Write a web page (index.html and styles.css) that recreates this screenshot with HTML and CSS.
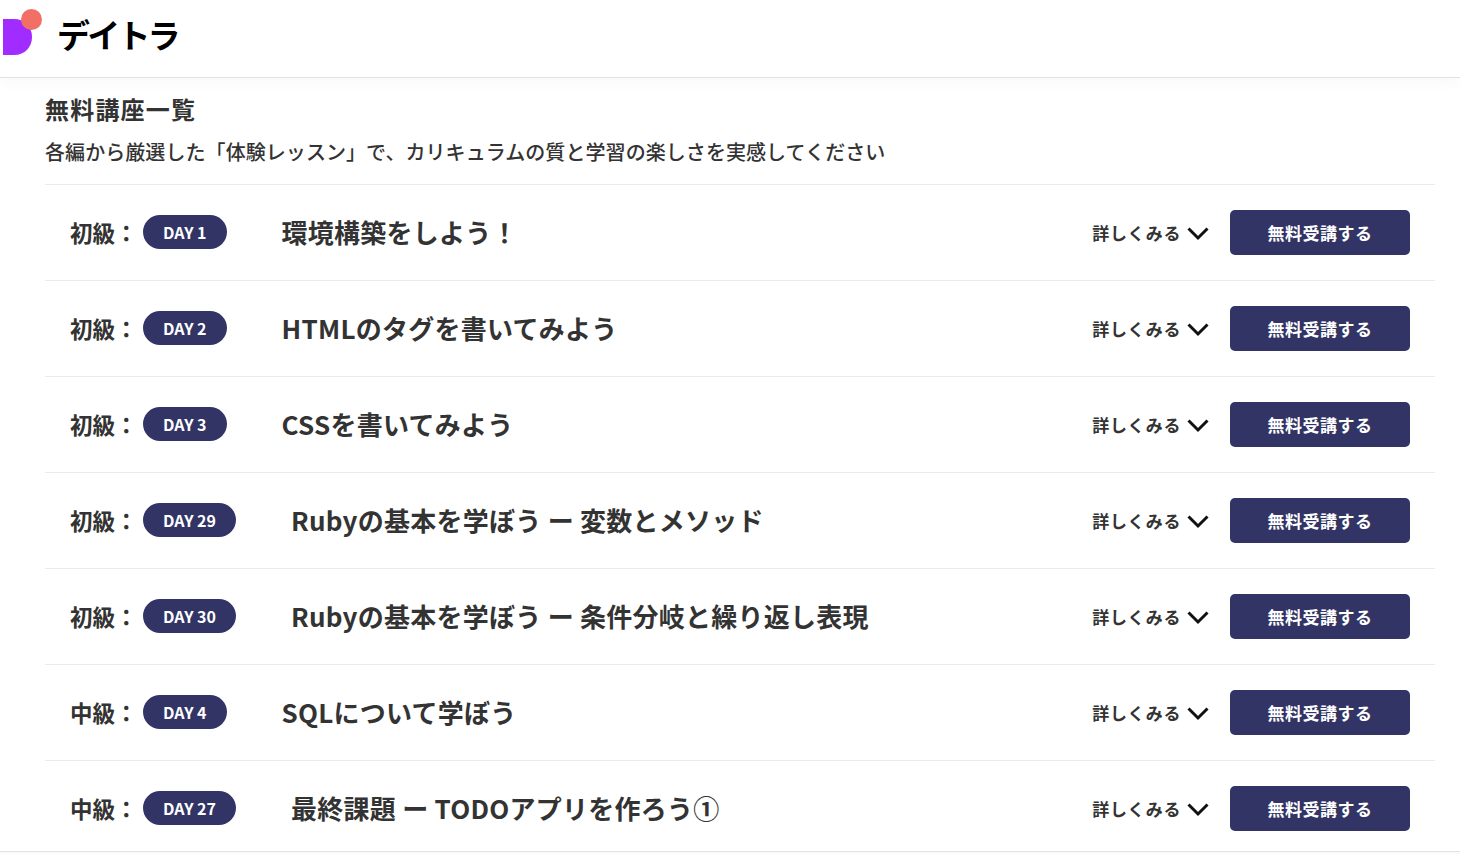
FILE: index.html
```html
<!DOCTYPE html>
<html lang="ja">

<head>
    <title>無料講座一覧 | デイトラ</title>
    <link rel="stylesheet" href="styles.css">
</head>

<body>
    <header class="site-header">
        <svg class="logo-mark" width="42" height="56" viewBox="0 0 42 56">
            <path d="M3 19 H14 C25 19 32 27 32 37 C32 47 25 55 14 55 H3 Z" fill="#a02cff" />
            <circle cx="31.5" cy="19.5" r="10.5" fill="#f26f66" />
        </svg>
        <span class="logo-text">デイトラ</span>
    </header>
    <main class="course-section">
        <h1 class="section-title">無料講座一覧</h1>
        <p class="section-lead">各編から厳選した「体験レッスン」で、カリキュラムの質と学習の楽しさを実感してください</p>
        <ul class="course-list">
            <li class="course-row">
                <span class="level">初級：</span>
                <span class="day-badge">DAY 1</span>
                <span class="course-name">環境構築をしよう！</span>
                <span class="more">詳しくみる
                    <svg class="chevron" width="22" height="14" viewBox="0 0 22 14"><polyline points="1.5,1.5 11,11 20.5,1.5" /></svg>
                </span>
                <a class="free-button">無料受講する</a>
            </li>
            <li class="course-row">
                <span class="level">初級：</span>
                <span class="day-badge">DAY 2</span>
                <span class="course-name">HTMLのタグを書いてみよう</span>
                <span class="more">詳しくみる
                    <svg class="chevron" width="22" height="14" viewBox="0 0 22 14"><polyline points="1.5,1.5 11,11 20.5,1.5" /></svg>
                </span>
                <a class="free-button">無料受講する</a>
            </li>
            <li class="course-row">
                <span class="level">初級：</span>
                <span class="day-badge">DAY 3</span>
                <span class="course-name">CSSを書いてみよう</span>
                <span class="more">詳しくみる
                    <svg class="chevron" width="22" height="14" viewBox="0 0 22 14"><polyline points="1.5,1.5 11,11 20.5,1.5" /></svg>
                </span>
                <a class="free-button">無料受講する</a>
            </li>
            <li class="course-row">
                <span class="level">初級：</span>
                <span class="day-badge">DAY 29</span>
                <span class="course-name">Rubyの基本を学ぼう ー 変数とメソッド</span>
                <span class="more">詳しくみる
                    <svg class="chevron" width="22" height="14" viewBox="0 0 22 14"><polyline points="1.5,1.5 11,11 20.5,1.5" /></svg>
                </span>
                <a class="free-button">無料受講する</a>
            </li>
            <li class="course-row">
                <span class="level">初級：</span>
                <span class="day-badge">DAY 30</span>
                <span class="course-name">Rubyの基本を学ぼう ー 条件分岐と繰り返し表現</span>
                <span class="more">詳しくみる
                    <svg class="chevron" width="22" height="14" viewBox="0 0 22 14"><polyline points="1.5,1.5 11,11 20.5,1.5" /></svg>
                </span>
                <a class="free-button">無料受講する</a>
            </li>
            <li class="course-row">
                <span class="level">中級：</span>
                <span class="day-badge">DAY 4</span>
                <span class="course-name">SQLについて学ぼう</span>
                <span class="more">詳しくみる
                    <svg class="chevron" width="22" height="14" viewBox="0 0 22 14"><polyline points="1.5,1.5 11,11 20.5,1.5" /></svg>
                </span>
                <a class="free-button">無料受講する</a>
            </li>
            <li class="course-row">
                <span class="level">中級：</span>
                <span class="day-badge">DAY 27</span>
                <span class="course-name">最終課題 ー TODOアプリを作ろう①</span>
                <span class="more">詳しくみる
                    <svg class="chevron" width="22" height="14" viewBox="0 0 22 14"><polyline points="1.5,1.5 11,11 20.5,1.5" /></svg>
                </span>
                <a class="free-button">無料受講する</a>
            </li>
        </ul>
    </main>
    <div class="section-divider"></div>
</body>

</html>
```

FILE: styles.css
```css
body {
    margin: 0;
    font-family: "Noto Sans CJK JP", "Noto Sans", sans-serif;
    color: #333;
    background-color: #fff;
}

.site-header {
    display: flex;
    height: 77px;
    border-bottom: 1px solid #e2e2e2;
    box-shadow: 0 2px 16px rgba(0, 0, 0, 0.04);
}

.logo-mark {
    flex-shrink: 0;
    margin-right: 15px;
}

.logo-text {
    font-size: 33px;
    font-weight: 700;
    line-height: 68px;
    letter-spacing: -2.8px;
    color: #000;
}

.course-section {
    padding: 0 25px 0 45px;
}

.section-title {
    margin: 0;
    padding-top: 13px;
    font-size: 24px;
    line-height: 36px;
    letter-spacing: 1.2px;
    font-weight: 700;
}

.section-lead {
    margin: 10px 0 0;
    padding-bottom: 17px;
    font-size: 20px;
    font-weight: 500;
    line-height: 30px;
    letter-spacing: 0.07px;
    border-bottom: 1px solid #e8ecf1;
}

.course-list {
    margin: 0;
    padding: 0;
    list-style: none;
}

.course-row {
    display: flex;
    align-items: center;
    padding: 25px;
    border-bottom: 1px solid #e8ecf1;
}

.course-row:last-child {
    padding-bottom: 20px;
    border-bottom: none;
}

.level {
    width: 73px;
    margin-bottom: 2px;
    font-size: 22.5px;
    font-weight: 700;
    white-space: nowrap;
}

.day-badge {
    padding: 0 20px;
    height: 34px;
    margin-bottom: 2px;
    line-height: 34px;
    border-radius: 17px;
    background-color: #313464;
    color: #fff;
    font-size: 16px;
    font-weight: 700;
}

.course-name {
    margin-left: 55px;
    margin-bottom: 2px;
    font-size: 26px;
    font-weight: 700;
    letter-spacing: 0.25px;
}

.more {
    display: flex;
    align-items: center;
    gap: 6px;
    margin-left: auto;
    font-size: 17px;
    font-weight: 700;
    letter-spacing: 0.6px;
}

.chevron {
    margin-top: 3px;
    fill: none;
    stroke: #111;
    stroke-width: 3;
}

.free-button {
    width: 180px;
    height: 45px;
    margin-left: 21px;
    line-height: 45px;
    text-align: center;
    border-radius: 5px;
    background-color: #313464;
    color: #fff;
    font-size: 17px;
    font-weight: 700;
    letter-spacing: 0.5px;
}

.section-divider {
    height: 2px;
    border-top: 1px solid #e2e2e2;
    background-color: #fafafa;
}
```
